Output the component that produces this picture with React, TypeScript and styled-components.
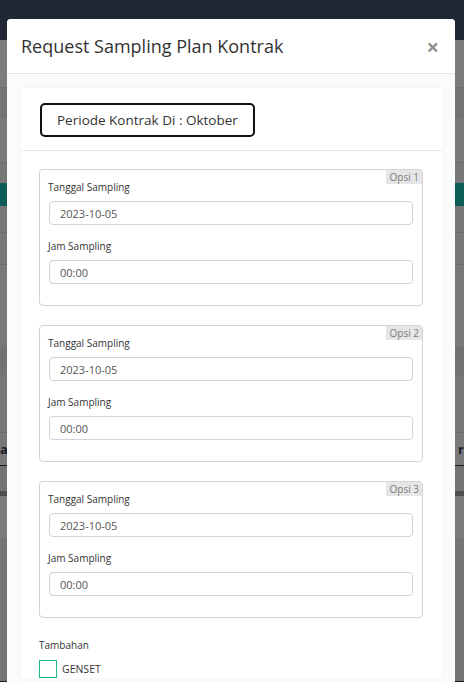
import styled, { createGlobalStyle } from 'styled-components';

const GlobalStyle = createGlobalStyle`
  html, body {
    margin: 0;
    padding: 0;
    background: #777777;
  }

  body {
    font-family: 'Open Sans', 'Liberation Sans', sans-serif;
    color: #333333;
  }
`;

const Page = styled.div`
  position: relative;
  width: 464px;
  height: 682px;
  overflow: hidden;
  background-color: #777777;
`;

const Navbar = styled.div`
  height: 40px;
  background-color: #212735;
`;

const Backdrop = styled.div`
  display: flex;
  flex-direction: column;
`;

const BackRow = styled.div<{ $h: number; $bg: string; $line?: string }>`
  height: ${(p) => p.$h}px;
  flex-shrink: 0;
  box-sizing: border-box;
  background-color: ${(p) => p.$bg};
  border-bottom: ${(p) => (p.$line ? `1px solid ${p.$line}` : 'none')};
  display: flex;
  justify-content: space-between;
  align-items: center;
  font-size: 13px;
  font-weight: 700;
  color: #1a1a2a;
`;

const BottomEdge = styled.div`
  position: absolute;
  left: 0;
  right: 0;
  bottom: 0;
  height: 1px;
  background-color: #1b1b1b;
`;

const Modal = styled.div`
  position: absolute;
  top: 19px;
  left: 7px;
  width: 448px;
  height: 700px;
  background-color: #fafbfb;
  border-radius: 4px 4px 0 0;
  overflow: hidden;
  display: flex;
  flex-direction: column;
`;

const ModalHeader = styled.div`
  height: 54px;
  flex-shrink: 0;
  display: flex;
  align-items: center;
  justify-content: space-between;
  padding: 0 16px 0 14px;
  background-color: #ffffff;
  border-bottom: 1px solid #e5e5e5;
`;

const Title = styled.h4`
  margin: 0;
  font-size: 18px;
  font-weight: 400;
  color: #333333;
`;

const Close = styled.span`
  font-size: 22px;
  font-weight: 700;
  color: #909090;
  line-height: 1;
`;

const ModalBody = styled.div`
  padding: 14px 13px 0 14px;
`;

const Card = styled.div`
  background-color: #ffffff;
  border-radius: 4px;
  box-shadow: 0 0 8px rgba(0, 0, 0, 0.03);
`;

const CardHeader = styled.div`
  padding: 15px 19px 13px;
  border-bottom: 1px solid #e9e9e9;
`;

const PeriodBox = styled.div`
  display: inline-flex;
  align-items: center;
  height: 34px;
  box-sizing: border-box;
  padding: 0 15px;
  border: 2px solid #111111;
  border-radius: 5px;
  font-size: 13.5px;
  color: #333333;
`;

const CardBody = styled.div`
  padding: 18px 19px 0 18px;
  display: flex;
  flex-direction: column;
  gap: 19px;
`;

const OptionBox = styled.div`
  position: relative;
  border: 1px solid #d9d0d4;
  border-radius: 4px;
  padding: 10px 9px 21px 8px;
  display: flex;
  flex-direction: column;
`;

const Badge = styled.span`
  position: absolute;
  top: 0;
  right: 0;
  height: 14px;
  line-height: 14px;
  padding: 0 3px;
  background-color: #e6e6e6;
  font-size: 10px;
  color: #7a7a7a;
`;

const Label = styled.label<{ $gap?: number }>`
  display: block;
  font-size: 10px;
  line-height: 14px;
  color: #333333;
  margin-top: ${(p) => p.$gap ?? 0}px;
  margin-bottom: 7px;
`;

const Field = styled.div`
  height: 24px;
  flex-shrink: 0;
  box-sizing: border-box;
  margin-left: 1px;
  border: 1px solid #cdd2db;
  border-radius: 4px;
  display: flex;
  align-items: center;
  padding-left: 10px;
  font-size: 11px;
  color: #555555;
`;

const Extra = styled.div`
  display: flex;
  flex-direction: column;
  margin-top: 1px;
`;

const ExtraLabel = styled.div`
  font-size: 10px;
  line-height: 14px;
  color: #333333;
  margin-bottom: 8px;
`;

const CheckRow = styled.div`
  display: flex;
  align-items: center;
  gap: 5px;
  font-size: 10.5px;
  color: #333333;
`;

const CheckBox = styled.span`
  width: 18px;
  height: 18px;
  flex-shrink: 0;
  box-sizing: border-box;
  border: 1.5px solid #22b98a;
`;

const backRows = [
  { h: 48, bg: '#7b7b7b', line: '#6f6f6f' },
  { h: 30, bg: '#747474', line: '#727272' },
  { h: 45, bg: '#797979', line: '#6c6c6c' },
  { h: 20, bg: '#777777' },
  { h: 23, bg: '#0e5c58' },
  { h: 27, bg: '#777777', line: '#6c6c6c' },
  { h: 32, bg: '#777777', line: '#6c6c6c' },
  { h: 82, bg: '#797979' },
  { h: 28, bg: '#727272' },
  { h: 58, bg: '#777777', line: '#6a6a6a' },
  { h: 33, bg: '#787878', line: '#1c1c1c', text: true },
  { h: 25, bg: '#737373' },
  { h: 5, bg: '#4e4e4e' },
  { h: 42, bg: '#7b7b7b' },
  { h: 200, bg: '#747474' },
];

const options = ['Opsi 1', 'Opsi 2', 'Opsi 3'];

const App = () => {
  return (
    <Page>
      <GlobalStyle />
      <Navbar />
      <Backdrop>
        {backRows.map((r, i) => (
          <BackRow key={i} $h={r.h} $bg={r.bg} $line={r.line}>
            {r.text ? (
              <>
                <span>a</span>
                <span>r</span>
              </>
            ) : null}
          </BackRow>
        ))}
      </Backdrop>
      <BottomEdge />

      <Modal>
        <ModalHeader>
          <Title>Request Sampling Plan Kontrak</Title>
          <Close>×</Close>
        </ModalHeader>
        <ModalBody>
          <Card>
            <CardHeader>
              <PeriodBox>Periode Kontrak Di : Oktober</PeriodBox>
            </CardHeader>
            <CardBody>
              {options.map((o) => (
                <OptionBox key={o}>
                  <Badge>{o}</Badge>
                  <Label>Tanggal Sampling</Label>
                  <Field>2023-10-05</Field>
                  <Label $gap={14}>Jam Sampling</Label>
                  <Field>00:00</Field>
                </OptionBox>
              ))}
              <Extra>
                <ExtraLabel>Tambahan</ExtraLabel>
                <CheckRow>
                  <CheckBox />
                  <span>GENSET</span>
                </CheckRow>
              </Extra>
            </CardBody>
          </Card>
        </ModalBody>
      </Modal>
    </Page>
  );
};

export default App;
